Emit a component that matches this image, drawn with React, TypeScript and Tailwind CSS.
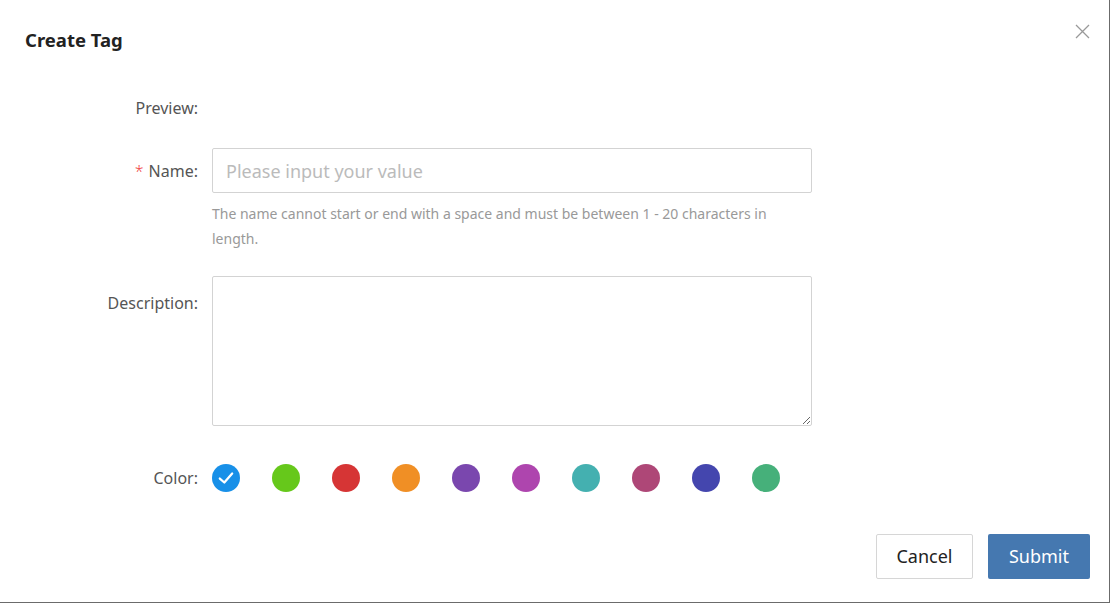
import { useState } from "react";

const COLORS = [
  "#1890e8",
  "#66c81b",
  "#d63535",
  "#f08f25",
  "#7a47ae",
  "#ae45ae",
  "#44b0b0",
  "#ae4777",
  "#4446ae",
  "#46b07a",
];

const font = { fontFamily: "'Noto Sans', Lato, sans-serif" };

export default function App() {
  const [selected, setSelected] = useState(0);
  const [name, setName] = useState("");
  const [desc, setDesc] = useState("");

  return (
    <div className="w-[1111px] h-[604px] bg-white" style={font}>
      <div className="relative w-[1110px] h-[603px] border-r border-b border-[#6b6b6b] bg-white flex flex-col">
        {/* Header */}
        <div className="flex items-center justify-between h-[80px] pl-[25px] pr-[17px]">
          <h2 className="text-[18.5px] font-bold text-[#222]">Create Tag</h2>
          <button className="w-[20px] h-[20px] flex items-center justify-center text-[#999] -mt-[18px]" aria-label="Close">
            <svg width="15" height="15" viewBox="0 0 15 15" fill="none" stroke="currentColor" strokeWidth="1.3">
              <path d="M1 1L14 14M14 1L1 14" />
            </svg>
          </button>
        </div>

        {/* Form */}
        <div className="flex flex-col text-[16px] text-[#555]">
          <div className="flex items-center h-[40px] mt-[8px]">
            <div className="w-[198px] text-right">Preview:</div>
          </div>

          <div className="flex mt-[20px]">
            <div className="w-[198px] h-[45px] flex items-center justify-end pt-[1px]">
              <span className="text-[#f04848] font-light mr-[5px]">*</span>
              Name:
            </div>
            <div className="ml-[14px] w-[600px] flex flex-col">
              <input
                value={name}
                onChange={(e) => setName(e.target.value)}
                placeholder="Please input your value"
                className="h-[45px] w-full rounded-[2px] border border-[#d3d3d3] px-[13px] text-[18px] text-[#333] placeholder:text-[#bbb] outline-none"
                style={font}
              />
              <p className="mt-[8px] pr-[30px] text-[14px] leading-[25px] text-[#999]">
                The name cannot start or end with a space and must be between 1 - 20 characters in length.
              </p>
            </div>
          </div>

          <div className="flex mt-[25px]">
            <div className="w-[198px] h-[54px] flex items-center justify-end">Description:</div>
            <textarea
              value={desc}
              onChange={(e) => setDesc(e.target.value)}
              className="ml-[14px] w-[600px] h-[150px] rounded-[2px] border border-[#d3d3d3] px-[13px] py-[10px] text-[16px] outline-none"
              style={font}
            />
          </div>

          <div className="flex items-center mt-[38px]">
            <div className="w-[198px] text-right">Color:</div>
            <div className="ml-[14px] flex items-center gap-[32px]">
              {COLORS.map((c, i) => (
                <button
                  key={c}
                  onClick={() => setSelected(i)}
                  className="w-[28px] h-[28px] rounded-full flex items-center justify-center"
                  style={{ backgroundColor: c }}
                  aria-label={`Color ${i + 1}`}
                >
                  {selected === i && (
                    <svg width="18" height="18" viewBox="0 0 16 16" fill="none" stroke="white" strokeWidth="2" strokeLinecap="round" strokeLinejoin="round">
                      <path d="M2.5 8.5L6.5 12L13.5 4" />
                    </svg>
                  )}
                </button>
              ))}
            </div>
          </div>
        </div>

        {/* Footer */}
        <div className="mt-auto flex justify-end gap-[15px] pr-[19px] pb-[23px]">
          <button className="w-[97px] h-[45px] rounded-[2px] border border-[#d6d6d6] bg-white text-[18px] text-[#222]">
            Cancel
          </button>
          <button className="w-[102px] h-[45px] rounded-[2px] bg-[#4578b0] text-[18px] text-white">
            Submit
          </button>
        </div>
      </div>
    </div>
  );
}
